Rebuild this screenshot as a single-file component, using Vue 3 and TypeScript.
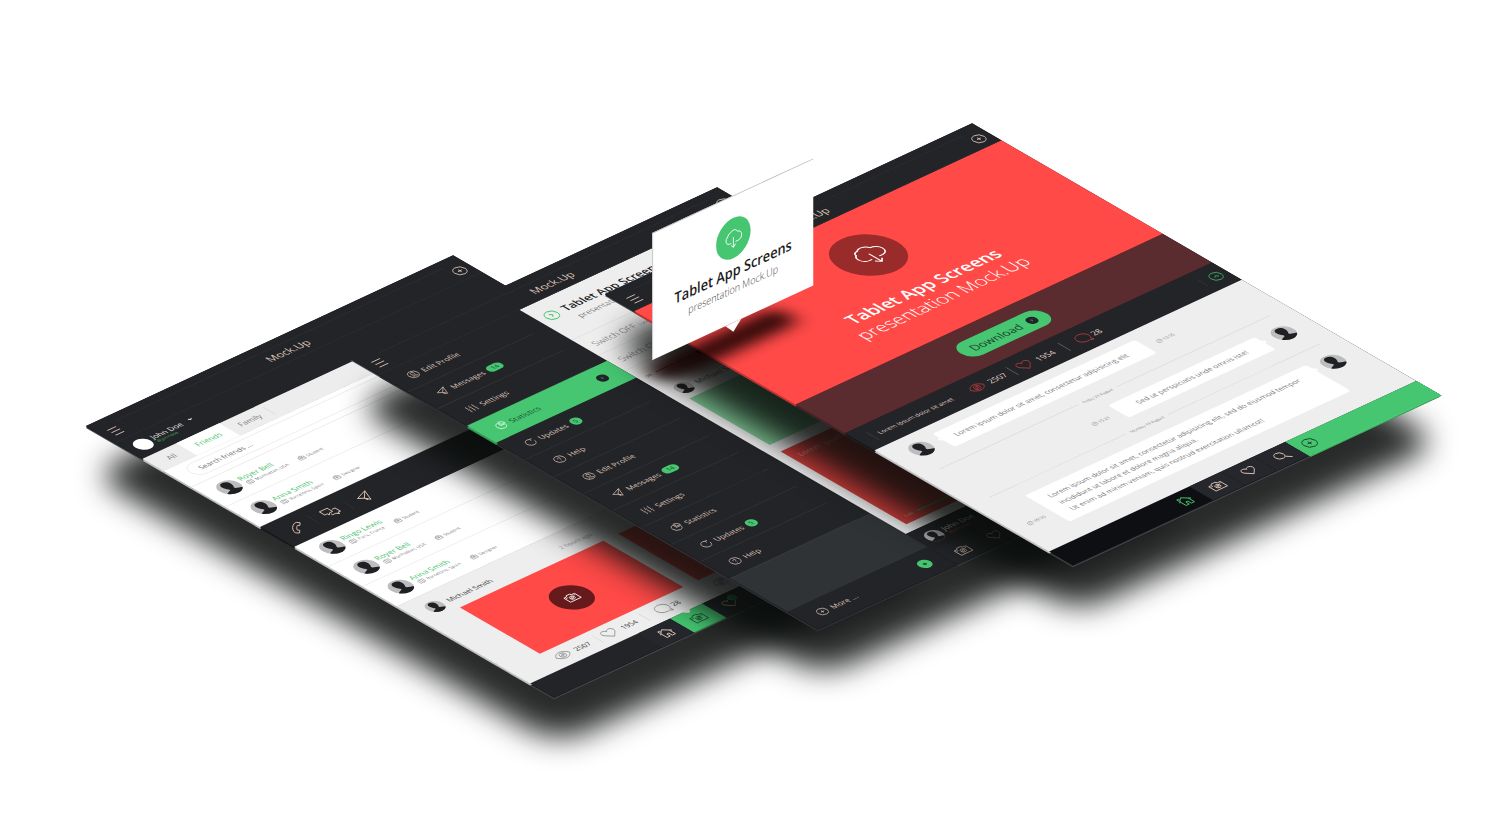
<script setup lang="ts">
import { h } from 'vue'

const glyphs: Record<string, string> = {
  menu: 'M3 3h18M3 12h18M3 21h18',
  plus: 'M12 1a11 11 0 1 0 0 22a11 11 0 1 0 0-22zM12 8v8M8 12h8',
  plain: 'M12 5v14M5 12h14',
  next: 'M12 1a11 11 0 1 0 0 22a11 11 0 1 0 0-22zM10 8l4 4-4 4',
  up: 'M12 1a11 11 0 1 0 0 22a11 11 0 1 0 0-22zM8 14l4-4 4 4',
  right: 'M8 5l7 7-7 7',
  down: 'M4 8l8 8 8-8',
  phone: 'M21 1L24 4.500L19 9.500L16 7.500C13 9 9 13 7.500 16L9.500 19L4.500 24L1 21C0 19 0.500 17 1.500 15C4 9.500 9.500 4 15 1.500C17 0.500 19 0 21 1z',
  chat: 'M0 1h15v11H9l-4 4V12H0zM18 7.500H24v11h-5v4L15 18.500H9v-3.500',
  send: 'M23 1L1 9.500l8 5.500 5 8zM23 1L9 15l1 6 2-3',
  camera: 'M1 6h5.500l2-3h7l2 3H23v15H1zM12 8.500a4.500 4.500 0 1 0 0 9a4.500 4.500 0 1 0 0-9zM12 11a2 2 0 1 0 0 4a2 2 0 1 0 0-4zM3 9h3M18.500 9H21',
  eye: 'M0 12C6 1.500 18 1.500 24 12C18 22.500 6 22.500 0 12zM12 7a5 5 0 1 0 0 10a5 5 0 1 0 0-10zM12 10a2 2 0 1 0 0 4a2 2 0 1 0 0-4z',
  heart: 'M12 21.500L3 12.500C0 9 1 4.500 4.500 3.300C7.500 2.300 10.500 3.500 12 6.500C13.500 3.500 16.500 2.300 19.500 3.300C23 4.500 24 9 21 12.500z',
  comment: 'M12 2C5.500 2 1 6 1 11.500S5.500 21 12 21c1.500 0 3-.2 4.300-.6L21 23l-1-5.500c2-1.500 3-3.500 3-6C23 6 18.500 2 12 2z',
  home: 'M1 12L12 2l11 10M4 9.500V22h6v-7h4v7h6V9.500M4 8V3h3v3',
  search: 'M10 2a8 8 0 1 0 0 16a8 8 0 1 0 0-16zM16 16l7 7',
  clock: 'M12 1a11 11 0 1 0 0 22a11 11 0 1 0 0-22zM12 6v7h5',
  pie: 'M11 3a10 10 0 1 0 10 10H11zM14 1v9h9c0-5-4-9-9-9z',
  sliders: 'M4 2v9M4 15v7M12 2v4M12 10v12M20 2v11M20 17v5M2 13h4M10 8h4M18 15h4',
  refresh: 'M17 4a10 10 0 1 0 5 8M17 9V4h5',
  help: 'M12 1a11 11 0 1 0 0 22a11 11 0 1 0 0-22zM9 10c0-4 6-4 6-.5c0 2-3 2.200-3 4.500M12 16.500v1.500',
  user: 'M12 1a11 11 0 1 0 0 22a11 11 0 1 0 0-22zM12 5c-5 0-4 8-1.500 9.500v2L6 19M12 5c5 0 4 8 1.500 9.500v2L18 19',
  map: 'M2 5l6.500-2 7 2L22 3v16l-6.500 2-7-2L2 21zM8.500 3v16M15.500 5v16',
  bag: 'M2 7h20v14H2zM8 7V3h8v4M2 13h8M14 13h8M10 11h4v4h-4z',
  cloud: 'M9 17H6.500A5 5 0 0 1 4.500 7.800A4 4 0 0 1 8.500 4.500A5.500 5.500 0 0 1 17.500 6.500A5 5 0 0 1 18 17H15M12 11v11.500M9 19.500l3 3 3-3',
}

const Icon = (props: { name: string }) =>
  h('svg', { viewBox: '0 0 24 24', 'aria-hidden': 'true' }, [h('path', { d: glyphs[props.name] })])

const Avatar = () =>
  h('svg', { viewBox: '0 0 40 40', 'aria-hidden': 'true' }, [
    h('rect', { width: 40, height: 40, fill: '#bdbdbd' }),
    h('path', {
      fill: '#1f2024',
      d: 'M20 4c-6 0-9 4-9 9c0 4 1 8 4 11v3c-4 2-9 3-12 6v9h34v-9c-3-3-8-4-12-6v-3c3-3 4-7 4-11c0-5-3-9-9-9z',
    }),
  ])

interface Friend { name: string; place: string; job: string }
const royer: Friend = { name: 'Royer Bell', place: 'Manhattan, USA', job: 'Student' }
const anna: Friend = { name: 'Anna Smith', place: 'Barcelona, Spain', job: 'Designer' }
const ringo: Friend = { name: 'Ringo Lewis', place: 'Paris, France', job: 'Student' }
const groups: Friend[][] = [[royer, anna], [ringo, royer, anna]]

const base = [
  { label: 'Edit Profile', icon: 'user', badge: '' },
  { label: 'Messages', icon: 'send', badge: '14' },
  { label: 'Settings', icon: 'sliders', badge: '' },
  { label: 'Statistics', icon: 'pie', badge: '' },
  { label: 'Updates', icon: 'refresh', badge: '5' },
  { label: 'Help', icon: 'help', badge: '' },
]
const menu = [...base, ...base].map((item, i) => ({ ...item, active: i === 3 }))

const stats = [
  { icon: 'eye', value: '2507' },
  { icon: 'heart', value: '1954' },
  { icon: 'comment', value: '28' },
]
const tabs = ['home', 'camera', 'heart', 'search']
</script>

<template>
  <main class="stage">
    <div class="slot slot-one">
      <div class="shade"></div>
      <section class="screen" aria-label="Friends">
        <header class="bar">
          <button class="ghost" aria-label="Menu"><Icon name="menu" class="ic burger" /></button>
          <h2>Mock.Up</h2>
          <button class="ghost" aria-label="Add"><Icon name="plus" class="ic" /></button>
        </header>
        <div class="profile">
          <span class="face-blank"></span>
          <div class="who"><b>John Doe</b><a href="#">@johndoe</a></div>
          <Icon name="down" class="ic tiny" />
        </div>
        <nav class="filters">
          <button>All</button>
          <button class="on">Friends</button>
          <button class="family">Family</button>
        </nav>
        <form class="search">
          <input type="text" aria-label="Search friends" placeholder="Search friends ..." />
        </form>
        <template v-for="(group, g) in groups" :key="g">
          <nav v-if="g === 1" class="actions">
            <button aria-label="Call"><Icon name="phone" class="ic" /></button>
            <button aria-label="Chat"><Icon name="chat" class="ic" /></button>
            <button aria-label="Send"><Icon name="send" class="ic" /></button>
          </nav>
          <ul class="friends">
            <li v-for="(f, i) in group" :key="i">
              <Avatar class="avatar" />
              <div>
                <a href="#">{{ f.name }}</a>
                <p>
                  <Icon name="map" class="ic mini" /><span>{{ f.place }}</span>
                  <Icon name="bag" class="ic mini job" /><span>{{ f.job }}</span>
                </p>
              </div>
            </li>
          </ul>
        </template>
        <div class="feed">
          <article class="post">
            <header><Avatar class="avatar small" /><b>Michael Smith</b><time>2 hours ago</time></header>
            <div class="photo"><span><Icon name="camera" class="ic" /></span></div>
            <ul class="stats">
              <li v-for="s in stats" :key="s.icon"><Icon :name="s.icon" class="ic" />{{ s.value }}</li>
            </ul>
          </article>
          <article class="post next">
            <header></header>
            <div class="photo"></div>
            <ul class="stats">
              <li v-for="s in stats" :key="s.icon"><Icon :name="s.icon" class="ic" />{{ s.value }}</li>
            </ul>
          </article>
        </div>
        <nav class="tabs">
          <button v-for="t in tabs" :key="t" :class="{ picked: t === 'camera' }" :aria-label="t">
            <Icon :name="t" class="ic" /><i v-if="t === 'heart'">3</i>
          </button>
        </nav>
      </section>
    </div>

    <div class="slot slot-two">
      <div class="shade"></div>
      <section class="screen split" aria-label="Menu">
        <header class="bar">
          <button class="ghost" aria-label="Menu"><Icon name="menu" class="ic burger" /></button>
          <h2>Mock.Up</h2>
          <button class="ghost" aria-label="Add"><Icon name="plus" class="ic" /></button>
        </header>
        <aside class="side">
          <ul>
            <li v-for="(m, i) in menu" :key="i" :class="{ active: m.active }">
              <a href="#"><Icon :name="m.icon" class="ic" />{{ m.label }}</a>
              <em v-if="m.badge" :class="{ dot: m.badge.length === 1 }">{{ m.badge }}</em>
              <span v-if="m.active" class="go"><Icon name="right" class="ic" /></span>
            </li>
          </ul>
          <div class="blank"></div>
          <footer>
            <a href="#"><Icon name="plus" class="ic" />More ...</a>
            <button aria-label="Add"><Icon name="plain" class="ic" /></button>
          </footer>
        </aside>
        <div class="content">
          <div class="intro">
            <Icon name="next" class="ic" />
            <div><h3>Tablet App Screens</h3><p>presentation Mock.Up</p></div>
          </div>
          <p class="switch">Switch OFF <small>Lorem ipsum</small></p>
          <p class="switch">Switch ON <small>Lorem ipsum</small></p>
          <div class="level"><small>0%</small><span></span></div>
          <div class="author"><Avatar class="avatar small" />Michael Smith</div>
          <div class="tile green"></div>
          <div class="tile red">
            <p>Lorem ipsum dolor</p>
            <div class="track"><small>0:49</small><span></span></div>
          </div>
        </div>
        <div class="profile account">
          <Avatar class="avatar small" />
          <div class="who"><b>John Doe</b><a href="#">@johndoe</a></div>
        </div>
        <nav class="tabs">
          <button v-for="t in tabs.slice(1)" :key="t" :aria-label="t"><Icon :name="t" class="ic" /></button>
        </nav>
      </section>
    </div>

    <div class="slot slot-three">
      <div class="shade"></div>
      <section class="screen" aria-label="Conversation">
        <header class="bar">
          <button class="ghost" aria-label="Menu"><Icon name="menu" class="ic burger" /></button>
          <h2>Mock.Up</h2>
          <button class="ghost" aria-label="Add"><Icon name="plus" class="ic" /></button>
        </header>
        <div class="hero">
          <span class="disc"><Icon name="cloud" class="ic" /></span>
          <h1>Tablet App Screens</h1>
          <p>presentation Mock.Up</p>
        </div>
        <div class="cta">
          <button>Download<span><Icon name="right" class="ic" /></span></button>
        </div>
        <div class="info">
          <p>Lorem ipsum dolor sit amet</p>
          <ul class="stats">
            <li v-for="s in stats" :key="s.icon"><Icon :name="s.icon" class="ic" />{{ s.value }}</li>
          </ul>
          <button class="ghost" aria-label="Collapse"><Icon name="up" class="ic" /></button>
        </div>
        <div class="talk">
          <div class="msg">
            <Avatar class="avatar" />
            <p>Lorem ipsum dolor sit amet, consectetur adipisicing elit</p>
            <time><Icon name="clock" class="ic" />13:05</time>
          </div>
          <div class="day"><span>Friday 23 August</span></div>
          <div class="msg mine">
            <time><Icon name="clock" class="ic" />15:21</time>
            <p>Sed ut perspiciatis unde omnis iste!</p>
            <Avatar class="avatar" />
          </div>
          <div class="day"><span>Monday 19 August</span></div>
          <div class="msg mine long">
            <time><Icon name="clock" class="ic" />09:00</time>
            <p>
              Lorem ipsum dolor sit amet, consectetur adipisicing elit, sed do eiusmod tempor<br />
              incididunt ut labore et dolore magna aliqua.<br />
              Ut enim ad minim veniam, quis nostrud exercitation ullamco!!
            </p>
            <Avatar class="avatar" />
          </div>
        </div>
        <nav class="tabs dark">
          <button v-for="t in tabs" :key="t" :class="{ current: t === 'home' }" :aria-label="t">
            <Icon :name="t" class="ic" />
          </button>
          <button class="add" aria-label="Add"><Icon name="plus" class="ic" /></button>
        </nav>
        <div class="cast"></div>
      </section>
    </div>

    <div class="flag">
      <span><Icon name="cloud" class="ic" /></span>
      <h2>Tablet App Screens</h2>
      <p>presentation Mock.Up</p>
    </div>
  </main>
</template>

<style>
body {
  margin: 0;
  background: #fff;
}
</style>

<style scoped>
.stage {
  position: relative;
  min-height: max(100vh, 830px);
  overflow: hidden;
  background: #fff;
  font-family: "Open Sans", "Noto Sans", sans-serif;
  color: #333;
}
.stage * {
  box-sizing: border-box;
}
h1, h2, h3, p, ul {
  margin: 0;
  padding: 0;
  font-weight: 400;
}
ul {
  list-style: none;
}
a {
  color: inherit;
  text-decoration: none;
}
b {
  font-weight: 400;
}
button {
  padding: 0;
  border: 0;
  background: none;
  color: inherit;
  font: inherit;
}
.ic {
  display: block;
  flex: none;
  width: 24px;
  height: 24px;
  overflow: visible;
  fill: none;
  stroke: currentColor;
  stroke-width: 1.5;
}

/* Screens laid on the tilted ground plane */
.slot {
  position: absolute;
}
.slot-one {
  left: calc(50% - 664px);
  top: calc(50% + 11px);
}
.slot-two {
  left: calc(50% - 400px);
  top: calc(50% - 57px);
}
.slot-three {
  left: calc(50% - 145px);
  top: calc(50% - 121px);
}
.screen {
  position: absolute;
  left: 0;
  top: 0;
  display: flex;
  flex-direction: column;
  width: 768px;
  height: 1024px;
  background: #232428;
  transform-origin: 0 0;
  transform: matrix(0.478, -0.2222, 0.457, 0.265, 0, 0);
  box-shadow: -1px 1px #17181b, -2px 2px #303135, -4px 4px #48494d;
}
.shade {
  position: absolute;
  left: 3px;
  top: 48px;
  filter: blur(15px);
}
.shade::before {
  content: "";
  display: block;
  width: 768px;
  height: 1024px;
  border-radius: 60px;
  background: rgba(8, 11, 9, 0.87);
  transform-origin: 0 0;
  transform: matrix(0.478, -0.2222, 0.457, 0.265, 0, 0);
}
.bar {
  position: relative;
  display: flex;
  flex: none;
  align-items: center;
  justify-content: space-between;
  height: 64px;
  padding: 14px 11px 0 13px;
  border-bottom: 1px solid #34363a;
  background: #232428;
  color: #dcc2b5;
}
.bar::before {
  content: "";
  position: absolute;
  left: 44px;
  right: 37px;
  top: 17px;
  height: 1px;
  background: #34363a;
}
.bar h2 {
  font-size: 21px;
  line-height: 32px;
}
.burger {
  stroke-width: 2;
}
.profile {
  display: flex;
  flex: none;
  align-items: center;
  height: 60px;
  padding-left: 14px;
  background: #232428;
  color: #e6e6e6;
}
.face-blank {
  width: 32px;
  height: 32px;
  border-radius: 50%;
  background: #fff;
}
.who {
  display: grid;
  margin: 0 14px 0 6px;
  font-size: 15px;
  line-height: 16px;
}
.who a {
  font-size: 9px;
  line-height: 12px;
  color: #36b35e;
}
.tiny {
  width: 10px;
  height: 10px;
  margin-bottom: 14px;
  stroke-width: 4;
}
.filters {
  display: flex;
  flex: none;
  height: 46px;
  background: #ededed;
  color: #777;
  font-size: 15px;
  box-shadow: -1px 1px #c9c9c9, -4px 4px #bdbdbd;
}
.filters button {
  width: 70px;
  padding-left: 6px;
}
.filters .on {
  width: 90px;
  padding: 0;
  background: #fff;
  color: #3fc169;
}
.filters .family {
  width: 84px;
  height: 28px;
  margin-top: 9px;
  padding: 0;
  border-right: 1px solid #cfcfcf;
}
.search {
  flex: none;
  height: 61px;
  padding: 10px 28px 0;
  background: #fff;
  border-bottom: 1px solid #dedede;
  box-shadow: -1px 1px #c9c9c9, -4px 4px #bdbdbd;
}
.search input {
  width: 100%;
  height: 37px;
  padding: 0 18px;
  border: 1px solid #e2e2e2;
  border-radius: 18px;
  background: #fff;
  font: 14px "Open Sans", sans-serif;
}
.search input::placeholder {
  color: #666;
  opacity: 1;
}
.friends {
  flex: none;
  background: #fff;
  box-shadow: -1px 1px #c9c9c9, -4px 4px #bdbdbd;
}
.friends li {
  display: flex;
  gap: 6px;
  align-items: center;
  height: 75px;
  padding-left: 24px;
  border-bottom: 1px solid #dedede;
}
.avatar {
  display: block;
  flex: none;
  width: 40px;
  height: 40px;
  border-radius: 50%;
}
.small {
  width: 32px;
  height: 32px;
}
.friends a {
  display: block;
  font-size: 15px;
  line-height: 17px;
  color: #3fc169;
}
.friends p {
  display: flex;
  align-items: center;
  gap: 4px;
  padding-left: 3px;
  font-size: 9px;
  line-height: 15px;
  color: #777;
}
.mini {
  width: 13px;
  height: 13px;
  stroke-width: 1.5;
}
.job {
  margin-left: 18px;
}
.actions {
  display: flex;
  flex: none;
  align-items: center;
  height: 75px;
  padding-left: 7px;
  background: #232428;
  color: #dcc2b5;
  box-shadow: -1px 1px #17181b, -4px 4px #17181b;
}
.actions button {
  display: grid;
  place-items: center;
  width: 70px;
  height: 30px;
  border-right: 1px solid #3b3d41;
}
.actions .ic {
  width: 26px;
  height: 26px;
}
.actions button:last-child {
  border: 0;
}
.feed {
  display: flex;
  flex: 1;
  gap: 31px;
  padding-left: 71px;
  background: #eee;
  box-shadow: -1px 1px #c9c9c9, -4px 4px #bdbdbd;
}
.post {
  width: 300px;
}
.post header {
  display: flex;
  align-items: center;
  gap: 10px;
  height: 63px;
  margin-left: -43px;
  padding-top: 10px;
  font-size: 14px;
}
.post time {
  margin-left: auto;
  font-size: 12px;
  color: #999;
}
.photo {
  display: grid;
  place-items: center;
  height: 175px;
  background: #ff4a48;
}
.photo span {
  display: grid;
  place-items: center;
  width: 70px;
  height: 70px;
  border-radius: 50%;
  background: #661a1b;
  color: #fff;
}
.stats {
  display: flex;
  align-items: center;
}
.stats li {
  display: flex;
  align-items: center;
  gap: 10px;
}
.stats .ic {
  width: 28px;
  height: 28px;
  stroke-width: 1;
}
.post .stats {
  height: 50px;
  padding-left: 10px;
  font-size: 14px;
}
.post .stats li {
  height: 24px;
  padding-right: 16px;
}
.post .stats li + li {
  padding-left: 11px;
  border-left: 1px solid #ccc;
}
.post .stats .ic {
  color: #777;
}
.post .stats li:last-child {
  gap: 4px;
  padding-left: 24px;
}
.tabs {
  display: flex;
  flex: none;
  height: 52px;
  padding-left: 226px;
  background: #232428;
  color: #dcc2b5;
}
.tabs button {
  position: relative;
  display: grid;
  place-items: center;
  width: 67px;
  background: #26272c;
}
.tabs .ic {
  width: 26px;
  height: 26px;
}
.tabs .picked {
  background: #46c671;
  color: #1e5c36;
  box-shadow: 0 2px #2f9c55;
}
.tabs .picked::before {
  content: "";
  position: absolute;
  top: -1px;
  left: 26px;
  border: 8px solid transparent;
  border-top-color: #eee;
  border-bottom: 0;
}
.tabs i {
  position: absolute;
  right: 12px;
  top: 8px;
  width: 16px;
  height: 16px;
  border-radius: 50%;
  background: #2f9c55;
  font: 9px/16px "Open Sans", sans-serif;
  text-align: center;
  color: #123;
}

/* Middle screen */
.split {
  display: grid;
  grid-template: 64px 846px 62px 52px / 293px 1fr;
}
.split .bar {
  grid-column: 1 / 3;
}
.side {
  grid-row: 2 / 5;
  display: flex;
  flex-direction: column;
  color: #dcc2b5;
  font-size: 15px;
  background: #232428;
  box-shadow: -1px 1px #17181b, -4px 4px #2c2d31;
}
.side li {
  position: relative;
  display: flex;
  align-items: center;
  gap: 6px;
  height: 64px;
  padding-left: 31px;
}
.side li::after {
  content: "";
  position: absolute;
  left: 0;
  right: 31px;
  bottom: 0;
  height: 1px;
  background: #3b3d41;
}
.side a {
  display: flex;
  align-items: center;
  gap: 8px;
}
.side a .ic {
  width: 20px;
  height: 20px;
}
.side em {
  width: 30px;
  margin-left: 2px;
  border-radius: 9px;
  background: #46c671;
  color: #1e3d2a;
  font: 12px/18px "Open Sans", sans-serif;
  text-align: center;
}
.side em.dot {
  width: 20px;
  border-radius: 10px;
  line-height: 20px;
}
.side .active {
  background: #46c671;
  color: #1f4d30;
  box-shadow: -4px 4px #2f9c55;
}
.side .active + li {
  background: #232428;
}
.side .active::after {
  display: none;
}
.side .active a .ic {
  color: #e9fff0;
}
.go {
  display: grid;
  place-items: center;
  width: 20px;
  height: 20px;
  margin-left: auto;
  margin-right: 30px;
  border-radius: 50%;
  background: #232428;
  color: #46c671;
}
.go .ic {
  width: 8px;
  height: 8px;
  stroke-width: 3;
}
.blank {
  flex: 1;
  border-top: 1px solid #3f4346;
  background: #2f3335;
}
.side footer {
  display: flex;
  align-items: center;
  justify-content: space-between;
  height: 68px;
  padding: 0 26px 0 31px;
  border-top: 1px solid #3f4346;
}
.side footer button {
  display: grid;
  place-items: center;
  width: 24px;
  height: 24px;
  border-radius: 50%;
  background: #46c671;
  color: #1e3d2a;
}
.side footer button .ic {
  width: 14px;
  height: 14px;
  stroke-width: 3;
}
.content {
  background: #eee;
  color: #555;
}
.intro {
  display: flex;
  gap: 12px;
  height: 115px;
  padding: 26px 0 0 14px;
  border-bottom: 1px solid #d6d6d6;
  color: #3fc169;
}
.intro .ic {
  width: 26px;
  height: 26px;
  margin-top: 4px;
}
.intro h3 {
  font-size: 22px;
  line-height: 28px;
  font-weight: 600;
  color: #222;
}
.intro p {
  padding-left: 4px;
  font-size: 16px;
  line-height: 34px;
  font-weight: 300;
  color: #444;
}
.switch {
  height: 58px;
  padding-left: 16px;
  border-bottom: 1px solid #d6d6d6;
  font-size: 18px;
  line-height: 58px;
  font-weight: 300;
}
.switch small,
.level small,
.track small {
  font-size: 9px;
}
.level,
.track {
  display: flex;
  align-items: center;
  gap: 8px;
}
.level {
  height: 64px;
  padding-left: 13px;
}
.level span {
  position: relative;
  width: 94px;
  height: 2px;
  background: #b04a3c;
}
.level span::after {
  content: "";
  position: absolute;
  right: -6px;
  top: -6px;
  width: 14px;
  height: 14px;
  border-radius: 50%;
  background: #232428;
}
.author {
  display: flex;
  align-items: center;
  gap: 8px;
  height: 56px;
  padding-left: 20px;
  font-size: 15px;
}
.tile {
  margin: 0 20px 24px;
  padding: 14px 14px 12px;
}
.green {
  height: 176px;
  background: #83cc9a;
}
.red {
  display: flex;
  flex-direction: column;
  justify-content: space-between;
  height: 275px;
  background: #d63f3d;
  color: #f09a92;
  font-size: 15px;
}
.track span {
  flex: 1;
  height: 3px;
  background: #46c671;
}
.account {
  height: 62px;
}
.account .who a {
  color: #c5473f;
}
.split .tabs {
  padding-left: 0;
  border-top: 1px solid #34363a;
}

/* Front screen */
.hero {
  flex: none;
  height: 353px;
  padding-top: 51px;
  background: #ff4a48;
  color: #fff;
  text-align: center;
  box-shadow: -1px 1px #c03231, -4px 4px #c03231;
}
.disc {
  display: grid;
  place-items: center;
  width: 120px;
  height: 120px;
  margin: 0 auto;
  border-radius: 50%;
  background: #992c2b;
}
.disc .ic {
  width: 60px;
  height: 60px;
  margin-left: 6px;
  stroke-width: 1;
}
.hero h1 {
  margin-top: 36px;
  font-size: 34px;
  line-height: 46px;
  font-weight: 600;
}
.hero p {
  font-size: 35px;
  line-height: 42px;
  font-weight: 300;
}
.cta {
  display: grid;
  flex: none;
  place-items: center;
  height: 108px;
  background: #5a2c2f;
  box-shadow: -1px 1px #451f22, -4px 4px #451f22;
}
.cta button {
  display: flex;
  align-items: center;
  justify-content: center;
  gap: 14px;
  width: 180px;
  height: 48px;
  border-radius: 24px;
  background: #46c671;
  color: #1f3a2a;
  font-size: 22px;
}
.cta span {
  display: grid;
  place-items: center;
  width: 20px;
  height: 20px;
  border-radius: 50%;
  background: #232428;
  color: #46c671;
}
.cta .ic {
  width: 8px;
  height: 8px;
  stroke-width: 3;
}
.info {
  display: flex;
  flex: none;
  align-items: center;
  height: 65px;
  padding: 0 11px 0 26px;
  background: #232428;
  color: #e4d5cd;
  font-size: 12px;
  box-shadow: -1px 1px #17181b, -4px 4px #17181b;
}
.info p {
  height: 28px;
  padding-left: 12px;
  border-left: 1px solid #4a4c50;
  line-height: 28px;
}
.info .stats {
  flex: 1;
  margin-left: 37px;
  font-size: 16px;
}
.info .stats li {
  height: 28px;
  padding-right: 13px;
}
.info .stats li + li {
  padding-left: 12px;
  border-left: 1px solid #8c8482;
}
.info .stats li + li + li {
  gap: 4px;
  margin-left: 8px;
  padding-left: 25px;
}
.info .stats .ic {
  color: #d8403e;
}
.info .ghost {
  padding-left: 16px;
  border-left: 1px solid #3b3d41;
  color: #3fae66;
}
.talk {
  flex: 1;
  padding: 22px 38px 0;
  background: #eee;
  box-shadow: -1px 1px #c9c9c9, -4px 4px #bdbdbd;
}
.msg {
  display: flex;
  gap: 22px;
  align-items: flex-start;
}
.msg p {
  position: relative;
  padding: 12px 38px 13px 24px;
  border-radius: 5px;
  background: #fff;
  color: #777;
  font-size: 14px;
  line-height: 24px;
  white-space: nowrap;
}
.msg p::before {
  content: "";
  position: absolute;
  left: -6px;
  top: 13px;
  border: 6px solid transparent;
  border-left: 0;
  border-right-color: #fff;
}
.mine p::before {
  left: auto;
  right: -6px;
  border: 6px solid transparent;
  border-right: 0;
  border-left-color: #fff;
}
.mine {
  justify-content: flex-end;
}
.mine p {
  padding: 11px 38px;
}
.msg time {
  display: flex;
  align-items: center;
  gap: 3px;
  margin-top: 19px;
  color: #888;
  font-size: 9px;
  line-height: 14px;
}
.msg time .ic {
  width: 10px;
  height: 10px;
  stroke-width: 2;
}
.long p {
  padding: 13px 38px 13px 26px;
}
.long time {
  margin: 56px auto 0 0;
}
.long {
  gap: 18px;
}
.day {
  display: flex;
  align-items: center;
  gap: 9px;
  height: 62px;
  font-size: 8px;
  color: #888;
}
.day::before,
.day::after {
  content: "";
  flex: 9;
  height: 1px;
  background: #cfcfcf;
}
.day::after {
  flex: 10;
}
.dark {
  background: #0d0f13;
}
.dark .current {
  background: none;
  color: #46c671;
}
.dark .add {
  flex: 1;
  justify-items: start;
  padding-left: 13px;
  background: #46c671;
  color: #174527;
  box-shadow: 0 1px #5bd884, 0 4px #3cb563;
}

/* Shadow that the upright card throws on the ground */
.cast {
  position: absolute;
  left: -110px;
  top: 192px;
  width: 285px;
  height: 56px;
  border-radius: 28px;
  background: rgba(20, 0, 0, 0.85);
  filter: blur(16px);
}

/* Upright card above the front screen */
.flag {
  position: absolute;
  left: calc(50% - 98px);
  top: calc(50% - 182px);
  width: 430px;
  height: 289px;
  padding-top: 49px;
  background: #fff;
  border-top: 2px solid #bbb;
  border-left: 3px solid #ccc;
  text-align: center;
  transform-origin: 0 0;
  transform: matrix(0.375, -0.1735, 0, 0.44, 0, 0);
}
.flag::after {
  content: "";
  position: absolute;
  left: 193px;
  top: 100%;
  border: 21px solid transparent;
  border-top-color: #fff;
  border-bottom: 0;
}
.flag span {
  display: grid;
  place-items: center;
  width: 92px;
  height: 92px;
  margin: 0 auto;
  border-radius: 50%;
  background: #46c671;
  color: #fff;
}
.flag .ic {
  width: 48px;
  height: 48px;
  stroke-width: 1;
}
.flag h2 {
  margin-top: 6px;
  font-size: 34px;
  line-height: 46px;
  font-weight: 600;
  color: #1c1c1c;
}
.flag p {
  font-size: 24px;
  line-height: 36px;
  font-weight: 300;
  color: #444;
}
</style>
